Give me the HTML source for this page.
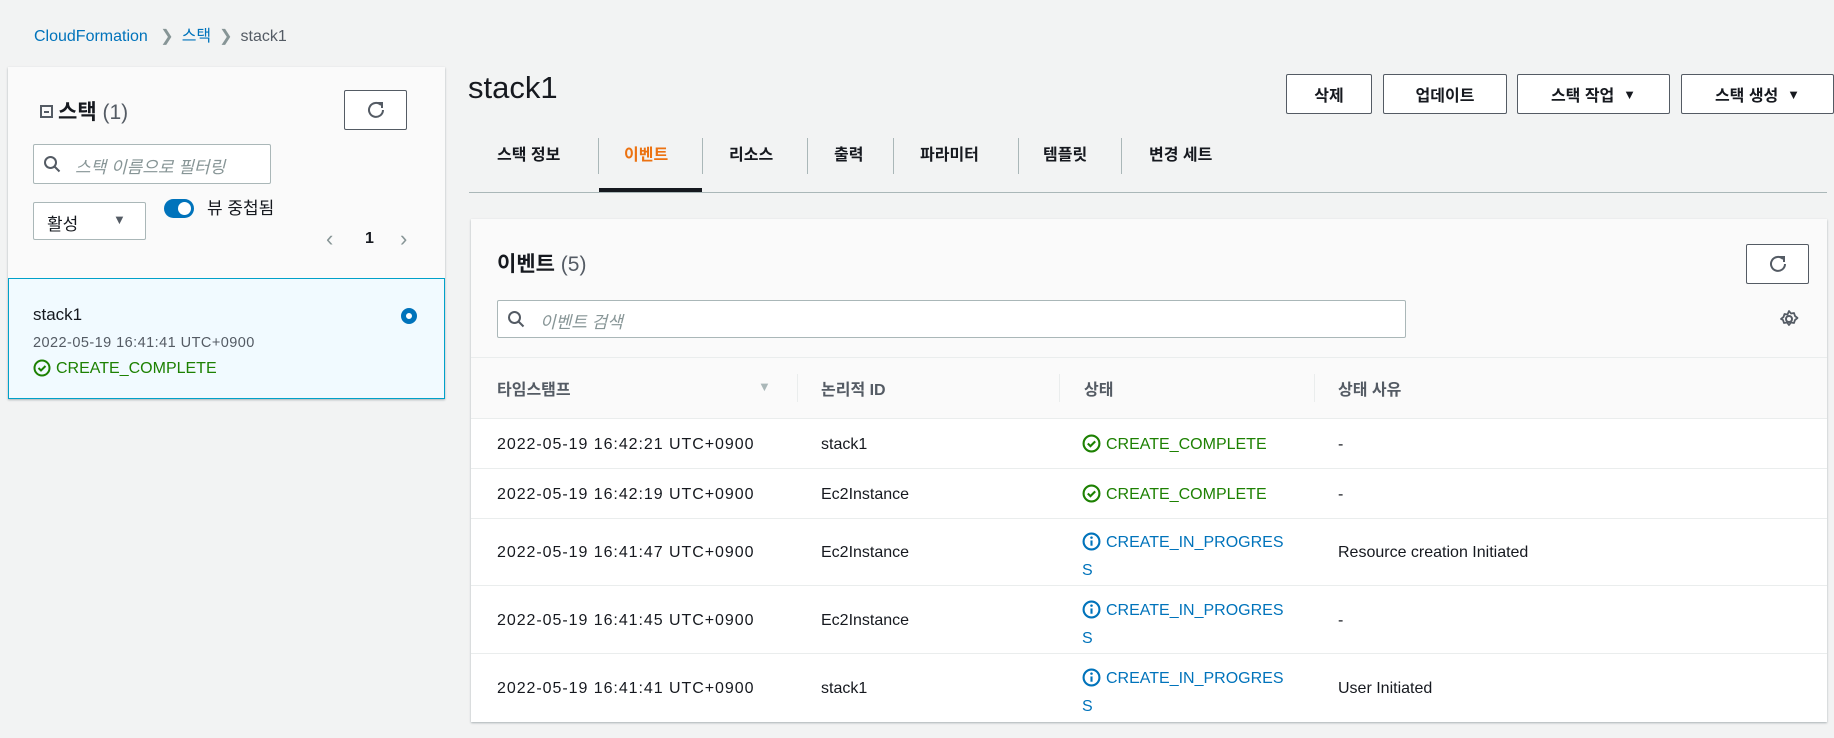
<!DOCTYPE html>
<html><head><meta charset="utf-8"><style>
*{box-sizing:border-box;margin:0;padding:0}
body{width:1834px;height:738px;background:#f2f3f3;font-family:"Liberation Sans","Noto Sans CJK KR",sans-serif;color:#16191f;position:relative;overflow:hidden;font-size:16px}
.a{position:absolute;white-space:nowrap}
.btn{position:absolute;border:1px solid #545b64;background:#fff;border-radius:2px;font-weight:bold;font-size:16px;display:flex;align-items:center;justify-content:center;color:#16191f}
.tab{position:absolute;top:141px;font-weight:bold;font-size:16px}
.div{position:absolute;top:138px;width:1px;height:36px;background:#aab7b8}
.hl{position:absolute;height:1px;background:#eaeded}
.g{color:#1d8102}.b{color:#0073bb}
.ic{display:inline-block;vertical-align:-4px;margin-right:5px}
.d{letter-spacing:0.95px}
</style></head><body>
<div class="a" style="left:34px;top:22px;font-size:16px"><span class="b">CloudFormation</span>
<span style="color:#879596;margin:0 8px">&#x276F;</span><span class="b">스택</span><span style="color:#879596;margin:0 8px">&#x276F;</span><span style="color:#545b64">stack1</span></div>

<!-- left panel -->
<div class="a" style="left:8px;top:67px;width:437px;height:332px;background:#fafafa;box-shadow:0 1px 2px rgba(0,28,36,.3)"></div>
<div class="a" style="left:8px;top:278px;width:437px;height:121px;background:#f1faff;border:1px solid #00a1c9"></div>
<div class="a" style="left:40px;top:96px;font-size:21px;font-weight:bold"><span style="display:inline-block;width:13px;height:13px;border:2px solid #545b64;vertical-align:1px;position:relative;margin-right:5px"><span style="position:absolute;left:2px;top:4px;width:5px;height:2px;background:#545b64"></span></span>스택 <span style="font-weight:normal;color:#545b64">(1)</span></div>
<div class="btn" style="left:344px;top:90px;width:63px;height:40px"><svg width="20" height="20" viewBox="0 0 20 20"><path d="M15 5A7 7 0 1 0 17 10" fill="none" stroke="#545b64" stroke-width="2"/><path d="M11 3h5v5" fill="none" stroke="#545b64" stroke-width="2"/></svg></div>
<div class="a" style="left:33px;top:144px;width:238px;height:40px;background:#fff;border:1px solid #aab7b8;border-radius:2px"></div>
<svg class="a" style="left:43px;top:155px" width="18" height="18" viewBox="0 0 18 18"><circle cx="7.5" cy="7.5" r="5.5" fill="none" stroke="#545b64" stroke-width="2"/><path d="M11.5 11.5l5 5" stroke="#545b64" stroke-width="2"/></svg>
<div class="a" style="left:75px;top:153px;font-style:italic;color:#879596;font-size:17px">스택 이름으로 필터링</div>
<div class="a" style="left:33px;top:202px;width:113px;height:38px;background:#fff;border:1px solid #aab7b8;border-radius:2px"></div>
<div class="a" style="left:47px;top:210px;font-size:17px">활성</div>
<div class="a" style="left:113px;top:212px;font-size:13px;color:#545b64">&#9660;</div>
<div class="a" style="left:164px;top:199px;width:30px;height:19px;border-radius:10px;background:#0073bb"><div style="position:absolute;right:3px;top:3px;width:13px;height:13px;border-radius:50%;background:#fff"></div></div>
<div class="a" style="left:207px;top:194px;font-size:17px">뷰 중첩됨</div>
<div class="a" style="left:326px;top:226px;font-size:22px;color:#879596">&#x2039;</div>
<div class="a" style="left:365px;top:230px;font-size:16px;font-weight:bold">1</div>
<div class="a" style="left:400px;top:226px;font-size:22px;color:#879596">&#x203A;</div>
<div class="a" style="left:33px;top:305px;font-size:17px">stack1</div>
<div class="a" style="left:33px;top:335px;font-size:14.5px;color:#545b64;letter-spacing:0.45px">2022-05-19 16:41:41 UTC+0900</div>
<div class="a g" style="left:33px;top:359px;font-size:16px"><svg class="ic" width="18" height="18" viewBox="0 0 18 18"><circle cx="9" cy="9" r="7.5" fill="none" stroke="#1d8102" stroke-width="2"/><path d="M5.5 9l2.5 2.5 4.5-4.5" fill="none" stroke="#1d8102" stroke-width="2"/></svg>CREATE_COMPLETE</div>
<div class="a" style="left:401px;top:308px;width:16px;height:16px;border-radius:50%;border:5px solid #0073bb;background:#fff"></div>

<!-- right -->
<div class="a" style="left:468px;top:70px;font-size:31px">stack1</div>
<div class="btn" style="left:1286px;top:74px;width:86px;height:40px">삭제</div>
<div class="btn" style="left:1383px;top:74px;width:124px;height:40px">업데이트</div>
<div class="btn" style="left:1517px;top:74px;width:153px;height:40px">스택 작업&nbsp;&nbsp;<span style="font-size:13px">&#9660;</span></div>
<div class="btn" style="left:1681px;top:74px;width:153px;height:40px">스택 생성&nbsp;&nbsp;<span style="font-size:13px">&#9660;</span></div>

<div class="tab" style="left:497px">스택 정보</div>
<div class="tab" style="left:624px;color:#ec7211">이벤트</div>
<div class="tab" style="left:729px">리소스</div>
<div class="tab" style="left:834px">출력</div>
<div class="tab" style="left:920px">파라미터</div>
<div class="tab" style="left:1043px">템플릿</div>
<div class="tab" style="left:1149px">변경 세트</div>
<div class="div" style="left:598px"></div><div class="div" style="left:702px"></div><div class="div" style="left:807px"></div><div class="div" style="left:893px"></div><div class="div" style="left:1018px"></div><div class="div" style="left:1121px"></div>
<div class="a" style="left:469px;top:192px;width:1358px;height:1px;background:#aab7b8"></div>
<div class="a" style="left:599px;top:188px;width:103px;height:4px;background:#16191f"></div>

<div class="a" style="left:471px;top:219px;width:1356px;height:503px;background:#fff;box-shadow:0 1px 2px rgba(0,28,36,.3)"></div>
<div class="a" style="left:471px;top:219px;width:1356px;height:199px;background:#fafafa"></div>
<div class="a" style="left:497px;top:248px;font-size:21px;font-weight:bold">이벤트 <span style="font-weight:normal;color:#545b64">(5)</span></div>
<div class="btn" style="left:1746px;top:244px;width:63px;height:40px"><svg width="20" height="20" viewBox="0 0 20 20"><path d="M15 5A7 7 0 1 0 17 10" fill="none" stroke="#545b64" stroke-width="2"/><path d="M11 3h5v5" fill="none" stroke="#545b64" stroke-width="2"/></svg></div>
<div class="a" style="left:497px;top:300px;width:909px;height:38px;background:#fff;border:1px solid #aab7b8;border-radius:2px"></div>
<svg class="a" style="left:507px;top:310px" width="18" height="18" viewBox="0 0 18 18"><circle cx="7.5" cy="7.5" r="5.5" fill="none" stroke="#545b64" stroke-width="2"/><path d="M11.5 11.5l5 5" stroke="#545b64" stroke-width="2"/></svg>
<div class="a" style="left:540px;top:308px;font-style:italic;color:#879596;font-size:17px">이벤트 검색</div>
<svg class="a" style="left:1779px;top:309px" width="20" height="20" viewBox="0 0 20 20"><circle cx="10" cy="10" r="3" fill="none" stroke="#545b64" stroke-width="2"/><path d="M10 2l2 2.5 3-.5 1 3 2.5 2-2.5 2-1 3-3-.5-2 2.5-2-2.5-3 .5-1-3L2 10l2.5-2 1-3 3 .5z" fill="none" stroke="#545b64" stroke-width="1.8" stroke-linejoin="round"/></svg>
<div class="hl" style="left:471px;top:357px;width:1356px"></div>
<div class="a" style="left:497px;top:376px;font-weight:bold;color:#545b64">타임스탬프</div>
<div class="a" style="left:758px;top:379px;font-size:13px;color:#aab7b8">&#9660;</div>
<div class="a" style="left:821px;top:376px;font-weight:bold;color:#545b64">논리적 ID</div>
<div class="a" style="left:1084px;top:376px;font-weight:bold;color:#545b64">상태</div>
<div class="a" style="left:1338px;top:376px;font-weight:bold;color:#545b64">상태 사유</div>
<div class="a" style="left:797px;top:374px;width:1px;height:28px;background:#eaeded"></div>
<div class="a" style="left:1059px;top:374px;width:1px;height:28px;background:#eaeded"></div>
<div class="a" style="left:1314px;top:374px;width:1px;height:28px;background:#eaeded"></div>
<div class="hl" style="left:471px;top:418px;width:1356px"></div>
<div class="hl" style="left:471px;top:468px;width:1356px"></div>
<div class="hl" style="left:471px;top:518px;width:1356px"></div>
<div class="hl" style="left:471px;top:585px;width:1356px"></div>
<div class="hl" style="left:471px;top:653px;width:1356px"></div>

<div class="a d" style="left:497px;top:436px">2022-05-19 16:42:21 UTC+0900</div>
<div class="a" style="left:821px;top:436px">stack1</div>
<div class="a g" style="left:1082px;top:434px"><svg class="ic" width="19" height="19" viewBox="0 0 18 18"><circle cx="9" cy="9" r="7.5" fill="none" stroke="#1d8102" stroke-width="2"/><path d="M5.5 9l2.5 2.5 4.5-4.5" fill="none" stroke="#1d8102" stroke-width="2"/></svg>CREATE_COMPLETE</div>
<div class="a" style="left:1338px;top:436px">-</div>

<div class="a d" style="left:497px;top:486px">2022-05-19 16:42:19 UTC+0900</div>
<div class="a" style="left:821px;top:486px">Ec2Instance</div>
<div class="a g" style="left:1082px;top:484px"><svg class="ic" width="19" height="19" viewBox="0 0 18 18"><circle cx="9" cy="9" r="7.5" fill="none" stroke="#1d8102" stroke-width="2"/><path d="M5.5 9l2.5 2.5 4.5-4.5" fill="none" stroke="#1d8102" stroke-width="2"/></svg>CREATE_COMPLETE</div>
<div class="a" style="left:1338px;top:486px">-</div>

<div class="a d" style="left:497px;top:544px">2022-05-19 16:41:47 UTC+0900</div>
<div class="a" style="left:821px;top:544px">Ec2Instance</div>
<div class="a b" style="left:1082px;top:529px;line-height:28px"><svg class="ic" width="19" height="19" viewBox="0 0 18 18"><circle cx="9" cy="9" r="7.5" fill="none" stroke="#0073bb" stroke-width="2"/><path d="M9 8v5" stroke="#0073bb" stroke-width="2"/><circle cx="9" cy="5.3" r="1.2" fill="#0073bb"/></svg>CREATE_IN_PROGRES<br>S</div>
<div class="a" style="left:1338px;top:544px">Resource creation Initiated</div>

<div class="a d" style="left:497px;top:612px">2022-05-19 16:41:45 UTC+0900</div>
<div class="a" style="left:821px;top:612px">Ec2Instance</div>
<div class="a b" style="left:1082px;top:597px;line-height:28px"><svg class="ic" width="19" height="19" viewBox="0 0 18 18"><circle cx="9" cy="9" r="7.5" fill="none" stroke="#0073bb" stroke-width="2"/><path d="M9 8v5" stroke="#0073bb" stroke-width="2"/><circle cx="9" cy="5.3" r="1.2" fill="#0073bb"/></svg>CREATE_IN_PROGRES<br>S</div>
<div class="a" style="left:1338px;top:612px">-</div>

<div class="a d" style="left:497px;top:680px">2022-05-19 16:41:41 UTC+0900</div>
<div class="a" style="left:821px;top:680px">stack1</div>
<div class="a b" style="left:1082px;top:665px;line-height:28px"><svg class="ic" width="19" height="19" viewBox="0 0 18 18"><circle cx="9" cy="9" r="7.5" fill="none" stroke="#0073bb" stroke-width="2"/><path d="M9 8v5" stroke="#0073bb" stroke-width="2"/><circle cx="9" cy="5.3" r="1.2" fill="#0073bb"/></svg>CREATE_IN_PROGRES<br>S</div>
<div class="a" style="left:1338px;top:680px">User Initiated</div>
</body></html>
